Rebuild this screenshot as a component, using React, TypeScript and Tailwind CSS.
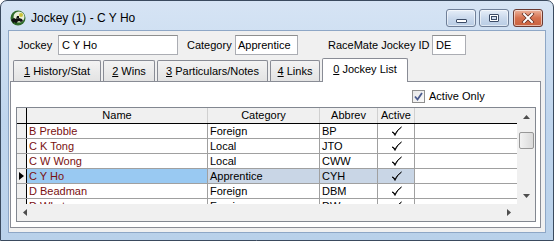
import React from 'react';

type Jockey = { name: string; category: string; abbrev: string; active: boolean };

const jockeys: Jockey[] = [
  { name: 'B Prebble', category: 'Foreign', abbrev: 'BP', active: true },
  { name: 'C K Tong', category: 'Local', abbrev: 'JTO', active: true },
  { name: 'C W Wong', category: 'Local', abbrev: 'CWW', active: true },
  { name: 'C Y Ho', category: 'Apprentice', abbrev: 'CYH', active: true },
  { name: 'D Beadman', category: 'Foreign', abbrev: 'DBM', active: true },
  { name: 'D Whyte', category: 'Foreign', abbrev: 'DW', active: true },
];

const SELECTED = 3;

function HorseIcon() {
  return (
    <svg width="16" height="16" viewBox="0 0 16 16">
      <circle cx="8" cy="8" r="7.5" fill="#2f6b2a" />
      <circle cx="9" cy="7" r="5.5" fill="#e8efd8" />
      <circle cx="11" cy="5" r="2" fill="#c9c23a" />
      <path d="M1 10 L4 8 L6 9 L9 8 L12 9 L13 11 L11 12 L9 11 L7 12 L6 14 L5 12 L3 13 L2 11 Z" fill="#111" />
      <path d="M6 9 L7 6 L9 6 L9 8 Z" fill="#111" />
    </svg>
  );
}

function WinButton({ kind }: { kind: 'min' | 'max' | 'close' }) {
  const base =
    'flex h-[18px] w-[30px] items-center justify-center rounded-[3px] border shadow-[inset_0_0_0_1px_rgba(255,255,255,0.55)]';
  if (kind === 'close') {
    return (
      <div className={`${base} border-[#6b3a32] bg-gradient-to-b from-[#ecb49e] via-[#d5714f] to-[#c9613e]`}>
        <svg width="14" height="10" viewBox="0 0 14 10">
          <path d="M3 1 L11 9 M11 1 L3 9" stroke="#5b2a20" strokeWidth="3.4" strokeLinecap="square" />
          <path d="M3 1 L11 9 M11 1 L3 9" stroke="#fff" strokeWidth="2" strokeLinecap="square" />
        </svg>
      </div>
    );
  }
  return (
    <div className={`${base} border-[#6f7f98] bg-gradient-to-b from-[#e6eef8] via-[#cad9ec] to-[#b8cce4]`}>
      {kind === 'min' ? (
        <div className="mt-[5px] h-[4px] w-[11px] rounded-[1px] border border-[#3b4b66] bg-white" />
      ) : (
        <div className="h-[8px] w-[10px] rounded-[1px] border border-[#3b4b66] bg-white p-[1px]">
          <div className="h-full w-full border border-[#3b4b66] bg-[#cfdcee]" />
        </div>
      )}
    </div>
  );
}

function Tab({ num, label, w }: { num: string; label: string; w: string }) {
  return (
    <div
      className={`${w} flex h-[21px] items-center justify-center rounded-t-[2px] border border-b-0 border-[#898c95] bg-gradient-to-b from-[#f3f3f3] to-[#e3e3e3]`}
    >
      <span>
        <span className="underline">{num}</span> {label}
      </span>
    </div>
  );
}

function Check() {
  return (
    <svg width="11" height="11" viewBox="0 0 11 11">
      <path d="M1 6 Q2.5 6.5 4 9.5 Q6 4 10.5 1 Q6.5 3.5 4 8 Q3 6 1 6 Z" fill="#000" stroke="#000" strokeWidth="0.8" strokeLinejoin="round" />
    </svg>
  );
}

export default function App() {
  return (
    <div className="h-[241px] w-[554px] overflow-hidden bg-white font-['Tahoma','Liberation_Sans',sans-serif] text-[11px] text-black">
      <div className="flex h-full w-full flex-col rounded-t-[7px] border border-[#3a4a5e] bg-gradient-to-b from-[#d6e4f4] via-[#bfd5ed] to-[#b9d1ea]">
        {/* title bar */}
        <div className="flex h-[29px] items-start">
          <div className="ml-[9px] mt-[9px]">
            <HorseIcon />
          </div>
          <span className="ml-[5px] mt-[9px] font-['Liberation_Sans',sans-serif] text-[12px] leading-[16px]">
            Jockey (1) - C Y Ho
          </span>
          <div className="ml-auto mr-[10px] mt-[8px] flex gap-[3px]">
            <WinButton kind="min" />
            <WinButton kind="max" />
            <div className="ml-[1px]">
              <WinButton kind="close" />
            </div>
          </div>
        </div>

        {/* client area */}
        <div className="mx-[7px] mb-[7px] flex flex-1 flex-col border border-[#8ea7c6] bg-[#f0f0f0]">
          {/* header fields */}
          <div className="mt-[4px] flex h-[20px] items-center pl-[9px]">
            <span className="w-[40px]">Jockey</span>
            <div className="flex h-[20px] w-[120px] items-center border border-[#abadb3] border-t-[#8e8f8f] bg-white pl-[3px]">
              C Y Ho
            </div>
            <span className="ml-[9px] w-[48px]">Category</span>
            <div className="flex h-[20px] w-[63px] items-center border border-[#abadb3] border-t-[#8e8f8f] bg-white pl-[2px]">
              Apprentice
            </div>
            <span className="ml-[30px] w-[104px]">RaceMate Jockey ID</span>
            <div className="flex h-[20px] w-[34px] items-center border border-[#abadb3] border-t-[#8e8f8f] bg-white pl-[3px]">
              DE
            </div>
          </div>

          {/* tabs */}
          <div className="mt-[3px] flex h-[23px] items-end gap-[2px] pl-[4px]">
            <Tab num="1" label="History/Stat" w="w-[88px]" />
            <Tab num="2" label="Wins" w="w-[52px]" />
            <Tab num="3" label="Particulars/Notes" w="w-[111px]" />
            <Tab num="4" label="Links" w="w-[50px]" />
            <div className="relative z-10 -mb-[1px] flex h-[24px] w-[86px] items-center justify-center rounded-t-[2px] border border-b-0 border-[#898c95] bg-white pb-[2px]">
              <span>
                <span className="underline">0</span> Jockey List
              </span>
            </div>
          </div>

          {/* tab panel */}
          <div className="ml-[1px] mr-[4px] flex h-[147px] flex-col border border-[#898c95] bg-white">
            <div className="mt-[8px] flex h-[13px] items-center pl-[401px]">
              <div className="flex h-[13px] w-[13px] items-center justify-center border border-[#8f8f8f] bg-gradient-to-br from-[#e8e8e8] to-[#fafafa]">
                <svg width="9" height="9" viewBox="0 0 9 9">
                  <path d="M1 4.5 L3.5 7.5 L8 1" stroke="#4b5b8e" strokeWidth="1.8" fill="none" />
                </svg>
              </div>
              <span className="ml-[4px]">Active Only</span>
            </div>

            {/* grid */}
            <div className="ml-[5px] mt-[4px] flex h-[115px] w-[520px] flex-col border border-[#828790] bg-white">
              <div className="flex h-[96px]">
                <div className="flex flex-1 flex-col overflow-hidden">
                  {/* header */}
                  <div className="flex h-[16px] shrink-0 border-b border-black bg-[#f0f0f0]">
                    <div className="w-[10px] shrink-0 border-r border-black" />
                    <div className="w-[181px] shrink-0 border-r border-[#d0d0d0] text-center leading-[15px]">Name</div>
                    <div className="w-[112px] shrink-0 border-r border-[#d0d0d0] text-center leading-[15px]">Category</div>
                    <div className="w-[58px] shrink-0 border-r border-[#d0d0d0] text-center leading-[15px]">Abbrev</div>
                    <div className="w-[37px] shrink-0 border-r border-[#d0d0d0] text-center leading-[15px]">Active</div>
                    <div className="flex-1" />
                  </div>
                  {jockeys.map((j, i) => {
                    const sel = i === SELECTED;
                    return (
                      <div key={j.name} className="flex h-[15px] shrink-0 border-b border-[#a0a0a0]">
                        <div className="flex w-[10px] shrink-0 items-center border-r border-black bg-[#f0f0f0] pl-[2px]">
                          {sel && (
                            <svg width="5" height="8" viewBox="0 0 5 8">
                              <path d="M0 0 L5 4 L0 8 Z" fill="#000" />
                            </svg>
                          )}
                        </div>
                        <div
                          className={`w-[181px] shrink-0 border-r border-[#a0a0a0] pl-[2px] leading-[14px] text-[#7a1010] ${sel ? 'bg-[#99c9f2]' : ''}`}
                        >
                          {j.name}
                        </div>
                        <div className={`w-[112px] shrink-0 border-r border-[#a0a0a0] pl-[2px] leading-[14px] ${sel ? 'bg-[#c9d6e6]' : ''}`}>
                          {j.category}
                        </div>
                        <div className={`w-[58px] shrink-0 border-r border-[#a0a0a0] pl-[2px] leading-[14px] ${sel ? 'bg-[#c9d6e6]' : ''}`}>
                          {j.abbrev}
                        </div>
                        <div
                          className={`flex w-[37px] shrink-0 items-center justify-center border-r border-[#a0a0a0] ${sel ? 'bg-[#c9d6e6]' : ''}`}
                        >
                          {j.active && <Check />}
                        </div>
                        <div className="flex-1" />
                      </div>
                    );
                  })}
                </div>
                {/* vertical scrollbar */}
                <div className="flex w-[18px] shrink-0 flex-col items-center bg-[#f0f0f0]">
                  <div className="flex h-[17px] items-center justify-center">
                    <svg width="7" height="4" viewBox="0 0 7 4">
                      <path d="M0 4 L3.5 0 L7 4 Z" fill="#4d4d4d" />
                    </svg>
                  </div>
                  <div className="mt-[7px] h-[17px] w-[15px] rounded-[2px] border border-[#979797] bg-gradient-to-r from-[#f2f2f2] to-[#dadada]" />
                  <div className="mt-auto flex h-[17px] items-center justify-center">
                    <svg width="7" height="4" viewBox="0 0 7 4">
                      <path d="M0 0 L7 0 L3.5 4 Z" fill="#4d4d4d" />
                    </svg>
                  </div>
                </div>
              </div>
              {/* horizontal scrollbar */}
              <div className="flex h-[17px] shrink-0">
                <div className="flex flex-1 items-center justify-between bg-[#f0f0f0] px-[6px]">
                  <svg width="4" height="7" viewBox="0 0 4 7">
                    <path d="M4 0 L0 3.5 L4 7 Z" fill="#4d4d4d" />
                  </svg>
                  <svg width="4" height="7" viewBox="0 0 4 7">
                    <path d="M0 0 L4 3.5 L0 7 Z" fill="#4d4d4d" />
                  </svg>
                </div>
                <div className="w-[18px] shrink-0 bg-[#f0f0f0]" />
              </div>
            </div>
          </div>
        </div>
      </div>
    </div>
  );
}
